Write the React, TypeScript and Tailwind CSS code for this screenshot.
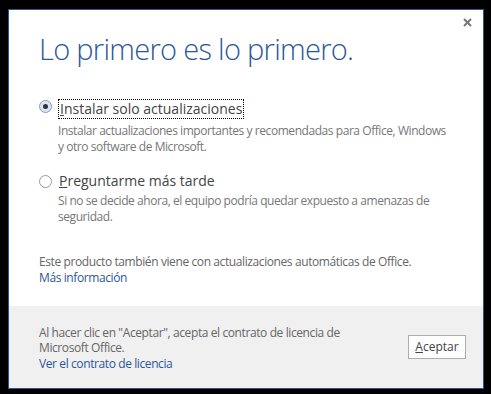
import React from "react";

function Radio({ checked }: { checked: boolean }) {
  return (
    <span
      className={
        "mt-[4px] h-[13px] w-[13px] shrink-0 rounded-full border flex items-center justify-center " +
        (checked
          ? "border-[#7f9db9] bg-[#dbe6f4]"
          : "border-[#9a9a9a] bg-white")
      }
    >
      {checked && <span className="h-[5px] w-[5px] rounded-full bg-[#333]" />}
    </span>
  );
}

export default function App() {
  return (
    <div
      className="h-[394px] w-[491px] bg-black pl-[8px] pt-[9px]"
      style={{ fontFamily: '"Open Sans", "Noto Sans", sans-serif' }}
    >
      <div className="relative flex h-[380px] w-[476px] flex-col border border-[#2b579a] bg-white">
        <button className="absolute right-[11px] top-[8px]">
          <svg width="9" height="9" viewBox="0 0 9 9">
            <path d="M1 1 L8 8 M8 1 L1 8" stroke="#777" strokeWidth="2" />
          </svg>
        </button>

        <div className="flex-1 pl-[30px] pt-[20px]">
          <h1 className="text-[29px] font-light leading-[37px] tracking-[-0.7px] text-[#2b579a]">
            Lo primero es lo primero.
          </h1>

          <div className="mt-[29px] flex gap-[6px]">
            <Radio checked={true} />
            <div>
              <div className="inline-block border border-dotted border-black px-px text-[14px] leading-[18px] text-[#444]">
                <span className="underline">I</span>nstalar solo actualizaciones
              </div>
              <p className="mt-[3px] text-[12px] leading-[16px] tracking-[-0.44px] text-[#777]">
                Instalar actualizaciones importantes y recomendadas para Office, Windows
                <br />y otro software de Microsoft.
              </p>
            </div>
          </div>

          <div className="mt-[16px] flex gap-[6px]">
            <Radio checked={false} />
            <div>
              <div className="px-px text-[14px] leading-[20px] text-[#444]">
                <span className="underline">P</span>reguntarme más tarde
              </div>
              <p className="mt-[2px] text-[12px] leading-[16px] tracking-[-0.44px] text-[#777]">
                Si no se decide ahora, el equipo podría quedar expuesto a amenazas de
                <br />
                seguridad.
              </p>
            </div>
          </div>

          <p className="mt-[29px] text-[12px] leading-[16px] tracking-[-0.4px] text-[#666]">
            Este producto también viene con actualizaciones automáticas de Office.
          </p>
          <a className="block text-[12px] leading-[16px] tracking-[-0.4px] text-[#2b579a]">
            Más información
          </a>
        </div>

        <div className="flex h-[82px] items-center justify-between bg-[#f0f0f0] pl-[30px] pr-[17px]">
          <div className="pt-[2px] text-[12px] leading-[15.5px] tracking-[-0.4px] text-[#666]">
            <p>Al hacer clic en "Aceptar", acepta el contrato de licencia de</p>
            <p>Microsoft Office.</p>
            <a className="block text-[#2b579a]">Ver el contrato de licencia</a>
          </div>
          <button className="h-[24px] w-[58px] border border-[#adadad] bg-[#fdfdfd] text-[12px] text-[#444]">
            <span className="underline">A</span>ceptar
          </button>
        </div>
      </div>
    </div>
  );
}
